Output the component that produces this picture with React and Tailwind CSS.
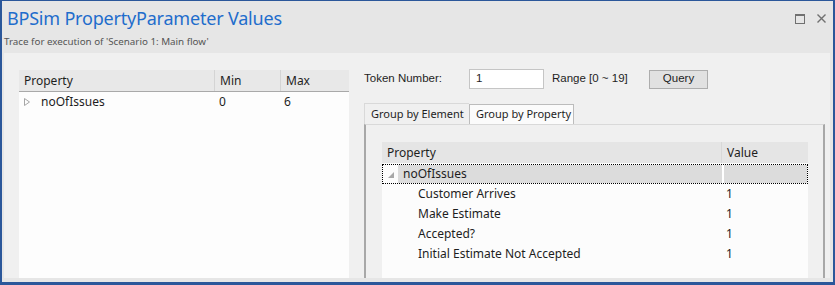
import React from 'react';

const ui = { fontFamily: '"Noto Sans", "Open Sans", sans-serif' };
const dlg = { fontFamily: '"Liberation Sans", Arial, sans-serif' };

const TRACE = [
  { name: 'Customer Arrives', value: 1 },
  { name: 'Make Estimate', value: 1 },
  { name: 'Accepted?', value: 1 },
  { name: 'Initial Estimate Not Accepted', value: 1 },
];

function MaxIcon() {
  return (
    <svg width="10" height="10" viewBox="0 0 10 10">
      <rect x="0.5" y="0.5" width="9" height="9" fill="none" stroke="#707070" strokeWidth="1" />
      <rect x="0" y="0" width="10" height="2" fill="#707070" />
    </svg>
  );
}

function CloseIcon() {
  return (
    <svg width="9" height="9" viewBox="0 0 9 9">
      <path d="M0.5 0.5 L8.5 8.5 M8.5 0.5 L0.5 8.5" stroke="#707070" strokeWidth="1.4" />
    </svg>
  );
}

export default function App() {
  return (
    <div
      className="w-[835px] h-[285px] bg-[#e6e6e6] border-[#2b579a] border-t border-x-2 border-b-[3px] flex flex-col text-[#1e1e1e]"
      style={ui}
    >
      {/* Title area */}
      <div className="h-[52px] shrink-0 flex">
        <div className="flex-1 pl-[5px]">
          <div className="text-[18px] leading-[24px] text-[#1f6dcc] pt-[5px] tracking-[-0.2px]">
            BPSim PropertyParameter Values
          </div>
          <div className="text-[9.8px] leading-[14px] text-[#555555] mt-[5px] -ml-[3px]">
            Trace for execution of 'Scenario 1: Main flow'
          </div>
        </div>
        <div className="flex items-start gap-[12px] pt-[13px] pr-[7px]">
          <MaxIcon />
          <CloseIcon />
        </div>
      </div>

      {/* Content */}
      <div className="flex-1 ml-[2px] mr-[3px] mb-[4px] bg-[#f0f0f0] flex">
        {/* Left property list */}
        <div className="ml-[15px] mt-[17px] w-[330px] bg-[#fdfdfd] flex flex-col text-[12px]">
          <div className="h-[22px] bg-[#e8e8e8] border-b border-[#a9a9a9] flex items-center">
            <div className="w-[196px] pl-[5px] border-r border-[#d4d4d4] h-full flex items-center">Property</div>
            <div className="w-[66px] pl-[5px] border-r border-[#d4d4d4] h-full flex items-center">Min</div>
            <div className="flex-1 pl-[5px]">Max</div>
          </div>
          <div className="h-[20px] flex items-center">
            <div className="w-[196px] flex items-center pl-[5px]">
              <svg width="6" height="8" viewBox="0 0 6 8" className="mr-[11px]">
                <path d="M0.5 0.5 L5.5 4 L0.5 7.5 Z" fill="none" stroke="#a6a6a6" strokeWidth="1" />
              </svg>
              noOfIssues
            </div>
            <div className="w-[66px] pl-[4px]">0</div>
            <div className="flex-1 pl-[3px]">6</div>
          </div>
        </div>

        {/* Right pane */}
        <div className="ml-[15px] mr-[5px] flex-1 flex flex-col">
          <div className="mt-[16px] h-[20px] flex items-center text-[11.5px]" style={dlg}>
            <span className="w-[105px]">Token Number:</span>
            <div className="w-[75px] h-[20px] bg-white border border-[#c5c5c5] flex items-center pl-[6px]">1</div>
            <span className="ml-[8px] w-[97px]">Range [0 ~ 19]</span>
            <div className="w-[59px] h-[19px] bg-[#e1e1e1] border border-[#adadad] flex items-center justify-center">
              Query
            </div>
          </div>

          {/* Tabs */}
          <div className="mt-[14px] h-[21px] flex items-end text-[11px] whitespace-nowrap">
            <div className="h-[21px] w-[105px] border-t border-l border-[#d9d9d9] flex items-center pl-[6px] bg-[#f0f0f0]">
              Group by Element
            </div>
            <div className="h-[20px] w-[105px] border border-b-0 border-[#bcbcbc] bg-[#fbfbfb] flex items-center pl-[6px]">
              Group by Property
            </div>
          </div>

          {/* Tab page */}
          <div className="flex-1 border-x-2 border-t border-x-[#a8a8a8] border-t-[#d9d9d9] bg-[#f0f0f0] pl-[16px] pr-[15px] pt-[17px] flex">
            <div className="flex-1 bg-[#fcfcfc] flex flex-col text-[12px]">
              <div className="h-[21px] bg-[#e5e5e5] flex items-center">
                <div className="w-[340px] pl-[5px] h-full flex items-center border-r border-[#d8d8d8]">Property</div>
                <div className="flex-1 pl-[5px]">Value</div>
              </div>
              <div className="h-[20px] mt-[1px] flex items-center border border-dotted border-black">
                <div className="w-[15px] h-full bg-[#fcfcfc] flex items-end justify-center pb-[5px]">
                  <svg width="6" height="6" viewBox="0 0 6 6">
                    <path d="M6 0 L6 6 L0 6 Z" fill="#a8a8a8" />
                  </svg>
                </div>
                <div className="w-[324px] h-full bg-[#dcdcdc] flex items-center pl-[5px]">noOfIssues</div>
                <div className="flex-1 h-full bg-[#dcdcdc] border-l-2 border-white"></div>
              </div>
              {TRACE.map((t) => (
                <div key={t.name} className="h-[20px] flex items-center">
                  <div className="w-[340px] pl-[36px]">{t.name}</div>
                  <div className="flex-1 pl-[4px]">{t.value}</div>
                </div>
              ))}
            </div>
          </div>
        </div>
      </div>
    </div>
  );
}
